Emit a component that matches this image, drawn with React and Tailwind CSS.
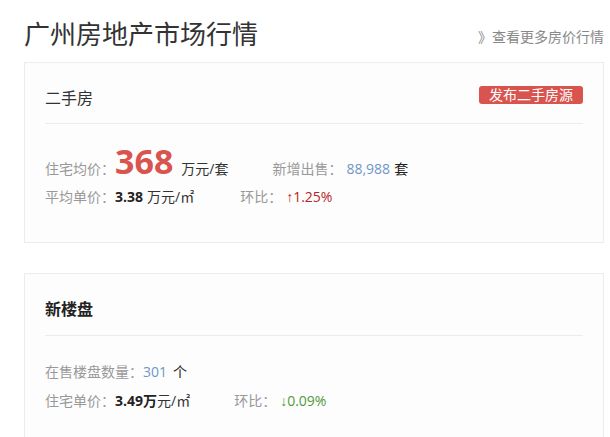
import React from "react";

const font = { fontFamily: '"Open Sans","Noto Sans CJK SC",sans-serif' };
const arrow = { fontFamily: '"Liberation Sans","DejaVu Sans",sans-serif' };

export default function App() {
  return (
    <div className="w-[610px] h-[437px] overflow-hidden bg-white pl-[24px] pr-[6px] text-[#333]" style={font}>
      <div className="flex justify-between items-start">
        <div className="pt-[17px] text-[26px] leading-[34px] text-[#333]">广州房地产市场行情</div>
        <div className="pt-[27px] text-[14px] leading-[20px] text-[#888]">》查看更多房价行情</div>
      </div>

      <div className="mt-[11px] border border-[#ececec] bg-[#fdfdfd] px-[20px] pb-[35px]">
        <div className="h-[61px] border-b border-[#ececec] flex justify-between items-start pt-[25px]">
          <div className="text-[16px] leading-[20px] text-[#333]">二手房</div>
          <div className="-mt-[2px] h-[18px] px-[10px] rounded-[3px] bg-[#d9534f] text-white text-[14px] leading-[18px] flex items-center">发布二手房源</div>
        </div>
        <div className="pt-[17px] flex items-baseline h-[57px] text-[14px]">
          <span className="text-[#999]">住宅均价：</span>
          <span className="text-[34px] leading-[40px] font-bold text-[#d9534f] mr-[8px]">368</span>
          <span className="text-[#333]">万元/套</span>
          <span className="ml-[44px] text-[#999]">新增出售：</span>
          <span className="text-[#6f97c5] ml-[4px]">88,988</span>
          <span className="text-[#222] ml-[4px]">套</span>
        </div>
        <div className="mt-[6px] flex items-baseline h-[20px] leading-[20px] text-[14px]">
          <span className="text-[#999]">平均单价：</span>
          <span className="font-bold text-[#222]">3.38</span>
          <span className="text-[#333] ml-[4px]">万元/㎡</span>
          <span className="ml-[46px] text-[#999]">环比：</span>
          <span className="text-[#b8242a] ml-[4px]"><span style={arrow}>↑</span>1.25%</span>
        </div>
      </div>

      <div className="mt-[30px] border border-[#ececec] bg-[#fdfdfd] px-[20px] pb-[40px]">
        <div className="h-[62px] border-b border-[#ececec] pt-[25px]">
          <div className="text-[16px] leading-[20px] font-bold text-[#222]">新楼盘</div>
        </div>
        <div className="pt-[26px] flex items-baseline h-[46px] leading-[20px] text-[14px]">
          <span className="text-[#999]">在售楼盘数量：</span>
          <span className="text-[#6f97c5]">301</span>
          <span className="text-[#222] ml-[6px]">个</span>
        </div>
        <div className="mt-[9px] flex items-baseline h-[20px] leading-[20px] text-[14px]">
          <span className="text-[#999]">住宅单价：</span>
          <span className="font-bold text-[#222]">3.49万</span>
          <span className="text-[#333]">元/㎡</span>
          <span className="ml-[44px] text-[#999]">环比：</span>
          <span className="text-[#4f9a3a] ml-[4px]"><span style={arrow}>↓</span>0.09%</span>
        </div>
      </div>
    </div>
  );
}
